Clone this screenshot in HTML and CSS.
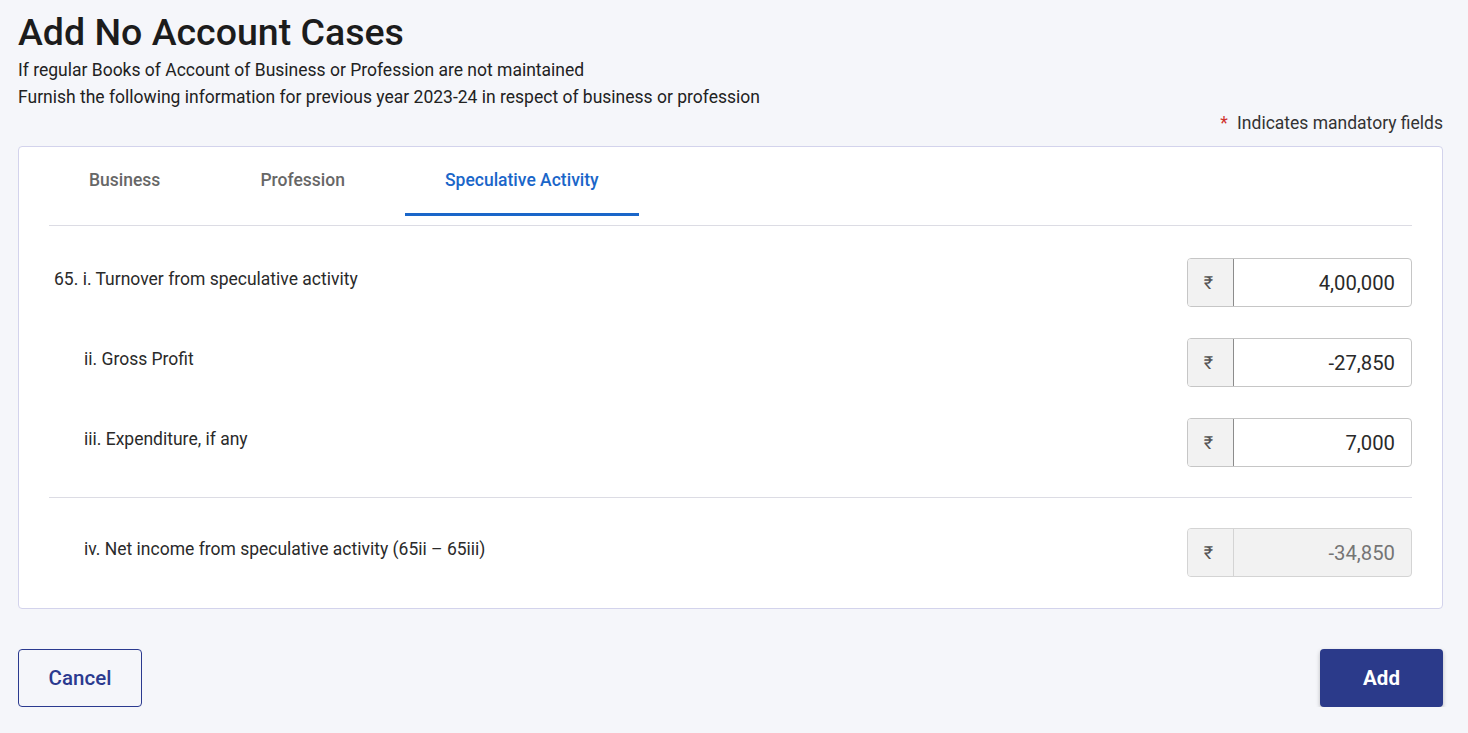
FILE: index.html
```html
<!DOCTYPE html>
<html lang="en">
<head>
<meta charset="utf-8">
<title>Add No Account Cases</title>
<link rel="stylesheet" href="styles.css">
</head>
<body>
<div class="page">
  <header class="header">
    <h1 class="title">Add No Account Cases</h1>
    <p class="subtitle">If regular Books of Account of Business or Profession are not maintained</p>
    <p class="subtitle">Furnish the following information for previous year 2023-24 in respect of business or profession</p>
    <div class="mandatory"><span class="star">*</span> Indicates mandatory fields</div>
  </header>

  <section class="card">
    <nav class="tabs">
      <div class="tab">Business</div>
      <div class="tab">Profession</div>
      <div class="tab active">Speculative Activity</div>
    </nav>

    <div class="rows">
      <div class="row">
        <div class="label first">65. i. Turnover from speculative activity</div>
        <div class="field">
          <span class="prefix">₹</span>
          <span class="value">4,00,000</span>
        </div>
      </div>
      <div class="row">
        <div class="label">ii. Gross Profit</div>
        <div class="field">
          <span class="prefix">₹</span>
          <span class="value">-27,850</span>
        </div>
      </div>
      <div class="row">
        <div class="label">iii. Expenditure, if any</div>
        <div class="field">
          <span class="prefix">₹</span>
          <span class="value">7,000</span>
        </div>
      </div>
    </div>

    <div class="rows total">
      <div class="row">
        <div class="label">iv. Net income from speculative activity (65ii – 65iii)</div>
        <div class="field disabled">
          <span class="prefix">₹</span>
          <span class="value">-34,850</span>
        </div>
      </div>
    </div>
  </section>

  <footer class="actions">
    <button class="btn btn-outline">Cancel</button>
    <button class="btn btn-primary">Add</button>
  </footer>
</div>
</body>
</html>
```

FILE: styles.css
```css
* { box-sizing: border-box; }

html, body {
  margin: 0;
  padding: 0;
  background: #f5f6fa;
  font-family: Roboto, "Liberation Sans", Arial, sans-serif;
  color: #1f1f1f;
}

.page {
  padding: 9px 25px 0 18px;
}

.title {
  margin: 0 0 2px;
  font-size: 37.5px;
  font-weight: 500;
  line-height: 46px;
  color: #1c1c1c;
}

.subtitle {
  margin: 0;
  font-size: 17.5px;
  line-height: 27px;
  color: #222;
}

.mandatory {
  text-align: right;
  font-size: 17.5px;
  line-height: 24px;
  color: #333;
}

.star {
  color: #d0312d;
  margin-right: 5px;
}

.card {
  margin-top: 11px;
  background: #fff;
  border: 1px solid #d3d3ec;
  border-radius: 4px;
  padding: 0 30px;
}

.tabs {
  display: flex;
  gap: 20px;
  padding-bottom: 9px;
  border-bottom: 1px solid #dcdce4;
}

.tab {
  padding: 21px 40px 21px;
  font-size: 17.5px;
  line-height: 24px;
  font-weight: 500;
  color: #676767;
  border-bottom: 3px solid transparent;
}

.tab.active {
  color: #1a66c9;
  border-bottom-color: #1a66c9;
}

.rows {
  display: flex;
  flex-direction: column;
  gap: 31px;
  padding: 32px 0 30px;
}

.rows.total {
  border-top: 1px solid #dcdce4;
  padding: 30px 0 31px;
}

.row {
  display: flex;
  justify-content: space-between;
  align-items: flex-start;
}

.label {
  padding-top: 9px;
  padding-left: 35px;
  font-size: 17.5px;
  line-height: 24px;
  color: #2a2a2a;
}

.label.first {
  padding-left: 5px;
}

.field {
  display: flex;
  width: 225px;
  height: 49px;
  border: 1px solid #c6c6c6;
  border-radius: 4px;
  overflow: hidden;
  background: #fff;
}

.prefix {
  width: 46px;
  flex: none;
  display: flex;
  align-items: center;
  justify-content: center;
  background: #f2f2f2;
  border-right: 1px solid #8c8c8c;
  color: #555;
  font-size: 18px;
  padding-right: 4px;
}

.value {
  flex: 1;
  display: flex;
  align-items: center;
  justify-content: flex-end;
  padding-right: 16px;
  font-size: 20.3px;
  color: #2a2a2a;
}

.field.disabled {
  background: #f2f2f2;
  border-color: #d4d4d4;
}

.field.disabled .prefix {
  border-right-color: #d4d4d4;
}

.field.disabled .value {
  color: #757575;
}

.actions {
  display: flex;
  justify-content: space-between;
  margin-top: 40px;
}

.btn {
  height: 58px;
  border-radius: 4px;
  font-family: Roboto, "Liberation Sans", Arial, sans-serif;
  font-size: 20.5px;
  cursor: pointer;
}

.btn-outline {
  width: 124px;
  background: transparent;
  border: 1px solid #2b3a8f;
  color: #2b3a8f;
  font-weight: 500;
}

.btn-primary {
  width: 123px;
  background: #2b3a8a;
  border: none;
  color: #fff;
  font-weight: 700;
  box-shadow: 0 2px 4px rgba(0, 0, 0, 0.25);
}
```
